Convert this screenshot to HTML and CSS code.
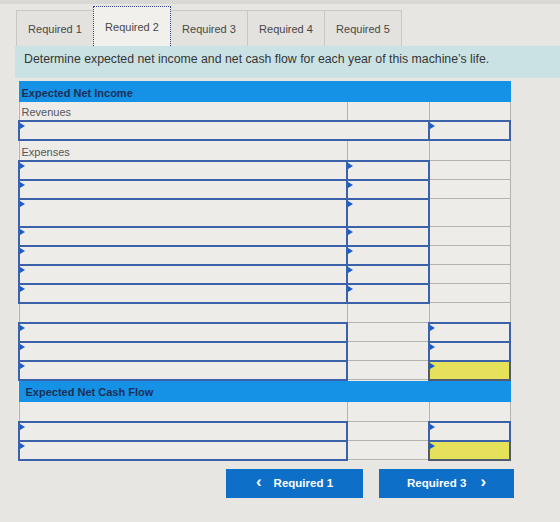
FILE: index.html
```html
<!DOCTYPE html>
<html>
<head>
<meta charset="utf-8">
<link rel="stylesheet" href="styles.css">
</head>
<body>
<div class="page">
  <div class="topstrip"></div>
  <div class="tabs">
    <div class="tab">Required 1</div>
    <div class="tab active">Required 2</div>
    <div class="tab">Required 3</div>
    <div class="tab">Required 4</div>
    <div class="tab">Required 5</div>
  </div>
  <div class="instr">Determine expected net income and net cash flow for each year of this machine’s life.</div>

  <table class="grid">
    <colgroup><col class="c1"><col class="c2"><col class="c3"></colgroup>
    <tr class="head"><td colspan="3">Expected Net Income</td></tr>
    <tr><td class="lbl">Revenues</td><td></td><td></td></tr>
    <tr><td class="in" colspan="2"></td><td class="in"></td></tr>
    <tr class="tall1"><td class="lbl">Expenses</td><td></td><td></td></tr>
    <tr><td class="in"></td><td class="in"></td><td></td></tr>
    <tr><td class="in"></td><td class="in"></td><td></td></tr>
    <tr class="tall"><td class="in"></td><td class="in"></td><td></td></tr>
    <tr><td class="in"></td><td class="in"></td><td></td></tr>
    <tr><td class="in"></td><td class="in"></td><td></td></tr>
    <tr><td class="in"></td><td class="in"></td><td></td></tr>
    <tr><td class="in"></td><td class="in"></td><td></td></tr>
    <tr class="blank"><td></td><td></td><td></td></tr>
    <tr><td class="in"></td><td></td><td class="in"></td></tr>
    <tr><td class="in"></td><td></td><td class="in"></td></tr>
    <tr><td class="in"></td><td></td><td class="in yellow"></td></tr>
    <tr class="head head2"><td colspan="3">Expected Net Cash Flow</td></tr>
    <tr class="blank"><td></td><td></td><td></td></tr>
    <tr><td class="in"></td><td></td><td class="in"></td></tr>
    <tr><td class="in"></td><td></td><td class="in yellow"></td></tr>
  </table>

  <div class="nav">
    <button class="btn prev"><span class="chev">&lsaquo;</span>Required 1</button>
    <button class="btn next">Required 3<span class="chev">&rsaquo;</span></button>
  </div>
</div>
</body>
</html>
```

FILE: styles.css
```css
* { box-sizing: border-box; }
html, body {
  margin: 0;
  padding: 0;
}
body {
  background: #e7e6e2;
  font-family: "Liberation Sans", Arial, sans-serif;
  width: 560px;
  height: 522px;
  overflow: hidden;
}
.page {
  position: relative;
  height: 522px;
}
.topstrip {
  height: 4px;
  background: #d9d8d4;
}
.tabs {
  display: flex;
  align-items: flex-end;
  padding-left: 16px;
  height: 42px;
}
.tab {
  width: 78px;
  height: 36px;
  border: 1px solid #c9c8c4;
  border-bottom: none;
  background: #e3e2de;
  color: #474747;
  font-size: 11px;
  display: flex;
  align-items: center;
  justify-content: center;
  margin-right: -1px;
}
.tab.active {
  height: 40px;
  background: #f1f0ed;
  border: 1px dotted #2f3f86;
  border-bottom: none;
  position: relative;
  z-index: 1;
}
.instr {
  margin-left: 15px;
  height: 32px;
  background: #cbe2e5;
  color: #353535;
  font-size: 12.3px;
  padding-left: 9px;
  padding-bottom: 6px;
  display: flex;
  align-items: center;
}
.grid {
  margin: 3px 0 0 18px;
  width: 491px;
  border-collapse: collapse;
  table-layout: fixed;
  background: #edece8;
}
.c1 { width: 328px; }
.c2 { width: 82px; }
.c3 { width: 81px; }
.grid td {
  height: 19px;
  border: 1px solid #b4b3b0;
  padding: 0 3px;
  font-size: 11px;
  color: #555;
  position: relative;
}
.grid tr.tall td { height: 28px; }
.grid tr.tall1 td { height: 21px; }
.grid tr.blank td { height: 20px; }
.grid tr.head td {
  height: 20px;
  background: #1592e6;
  border: 1px solid #1592e6;
  color: #1c2f57;
  font-weight: bold;
  padding-left: 2px;
  padding-top: 2px;
}
.grid tr.head2 td {
  height: 22px;
  padding-left: 6px;
}
.grid td.lbl {
  color: #565656;
  padding-left: 2px;
  padding-top: 3px;
}
.grid td.in {
  border: 2px solid #3b62a8;
}
.grid td.in::before {
  content: "";
  position: absolute;
  left: 0;
  top: 1px;
  border-left: 5px solid #1b5dc8;
  border-top: 3px solid transparent;
  border-bottom: 3px solid transparent;
}
.grid td.yellow {
  background: #e6e15a;
  border-color: #4f5a6a;
}
.nav {
  display: flex;
  padding-left: 226px;
  margin-top: 8px;
  gap: 16px;
}
.btn {
  height: 29px;
  border: none;
  background: #0e6fc9;
  color: #ffffff;
  font-family: "Liberation Sans", Arial, sans-serif;
  font-weight: bold;
  font-size: 11.5px;
  display: flex;
  align-items: center;
  justify-content: center;
  padding: 0;
}
.btn.prev { width: 137px; }
.btn.next { width: 135px; }
.chev {
  font-size: 17px;
  font-weight: bold;
  line-height: 1;
  margin-top: -3px;
}
.prev .chev { margin-right: 12px; }
.next .chev { margin-left: 14px; }
```
